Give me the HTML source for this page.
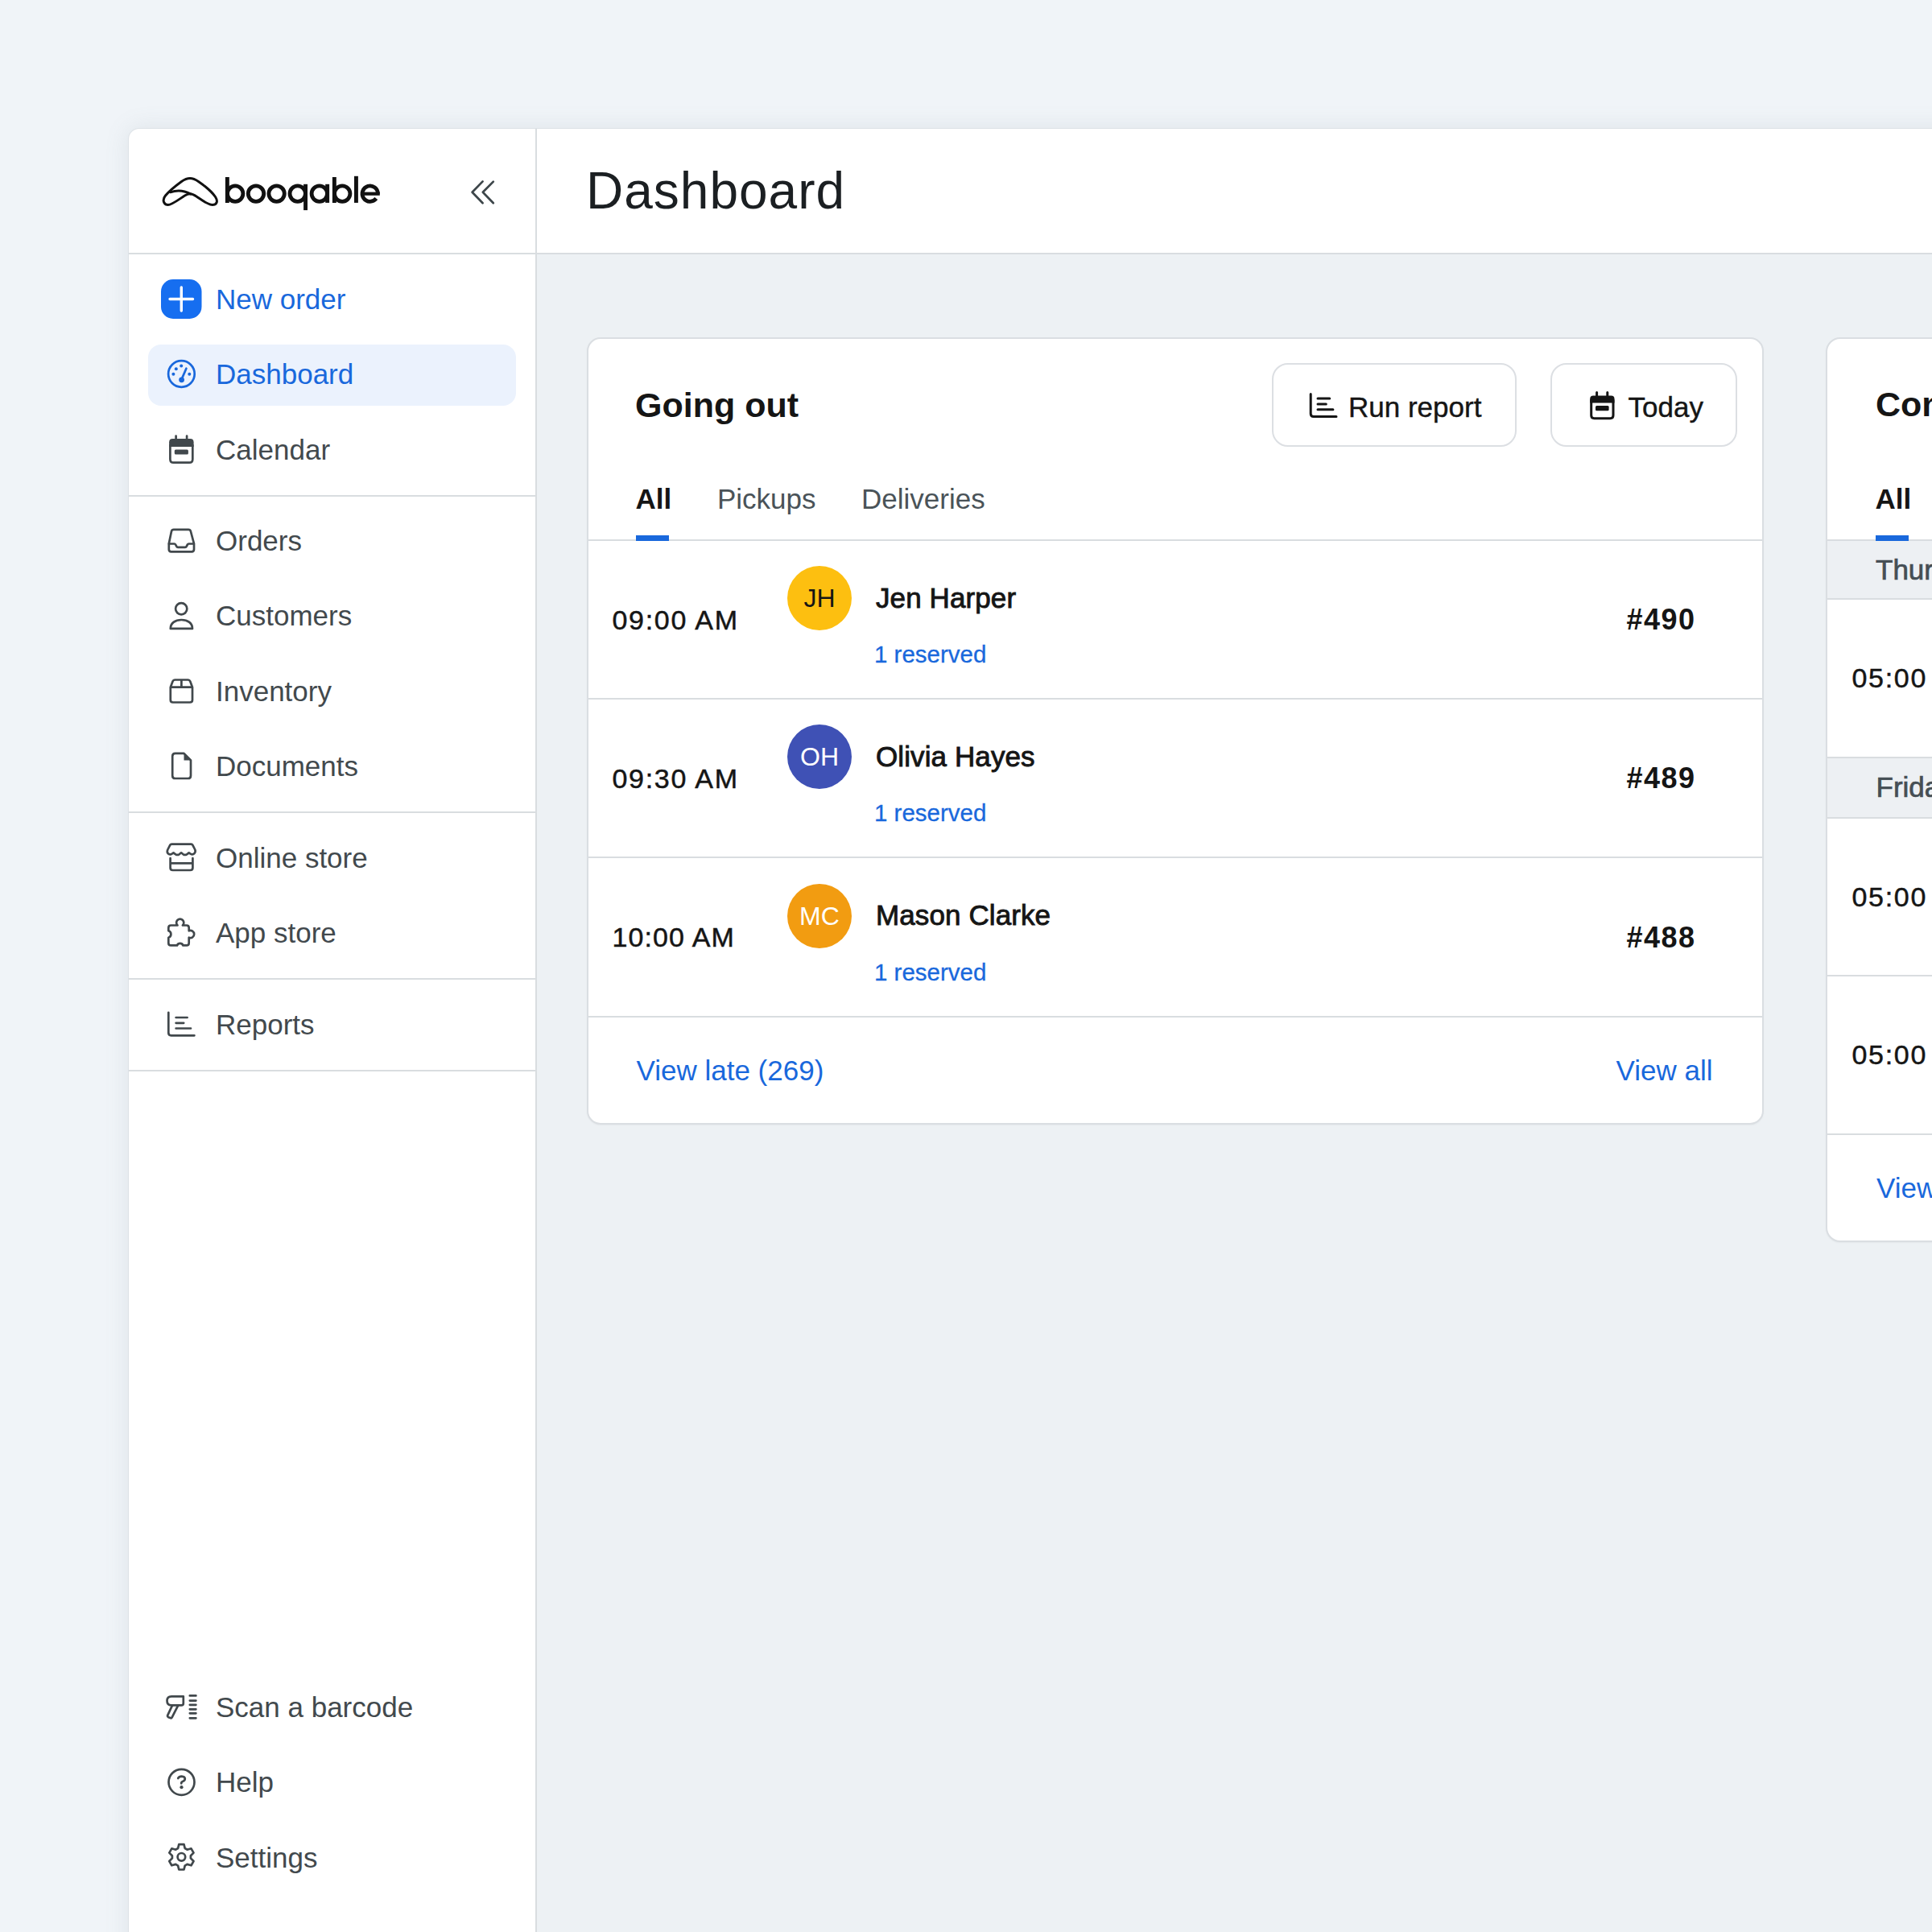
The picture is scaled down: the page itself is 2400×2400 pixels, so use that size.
<!DOCTYPE html>
<html><head><meta charset="utf-8">
<style>
html,body{margin:0;padding:0;width:2400px;height:2400px;overflow:hidden;background:#f0f4f8;}
*{box-sizing:border-box;}
body{font-family:"Liberation Sans",sans-serif;position:relative;}
.abs{position:absolute;}
.t{position:absolute;white-space:nowrap;line-height:1;}
#win{position:absolute;left:160px;top:160px;width:2300px;height:2300px;background:#fff;border-radius:13px 0 0 0;
 box-shadow:0 0 0 1px rgba(190,198,204,0.25),0 0 30px rgba(120,135,145,0.16);}
#main{position:absolute;left:667px;top:316px;width:1800px;height:2100px;background:#edf1f4;}
.hl{position:absolute;height:2px;background:#d9dde0;}
.vl{position:absolute;width:2px;background:#d9dde0;}
.nav{font-size:35px;color:#42494d;}
.blue{color:#1968dc;}
.card{position:absolute;background:#fff;border:2px solid #dadee2;border-radius:17px;box-shadow:0 1px 2px rgba(0,0,0,0.04);}
.btn{position:absolute;border:2px solid #dcdfe3;border-radius:20px;background:#fff;}
.av{position:absolute;width:80px;height:80px;border-radius:50%;font-size:32px;line-height:80px;text-align:center;}
svg{position:absolute;overflow:visible;}
</style></head><body>
<div id="win"></div>
<div id="main"></div>
<!-- header/sidebar borders -->
<div class="vl" style="left:665px;top:160px;height:2240px;"></div>
<div class="hl" style="left:160px;top:314px;width:2240px;"></div>
<div class="hl" style="left:160px;top:615px;width:505px;"></div>
<div class="hl" style="left:160px;top:1008px;width:505px;"></div>
<div class="hl" style="left:160px;top:1215px;width:505px;"></div>
<div class="hl" style="left:160px;top:1329px;width:505px;"></div>


<!-- SIDEBAR TEXT -->
<svg width="2400" height="2400" style="left:0;top:0;" viewBox="0 0 2400 2400">
 <g fill="none" stroke="#111" stroke-width="4.8">
  <circle cx="292.2" cy="240.6" r="9.7"/><circle cx="318" cy="240.6" r="9.7"/><circle cx="343.6" cy="240.6" r="9.7"/>
  <circle cx="369.7" cy="240.6" r="9.7"/><circle cx="396.8" cy="240.6" r="9.7"/><circle cx="425.2" cy="240.6" r="9.7"/>
  <path d="M469.40 240.79999999999998 A9.7 9.7 0 1 0 467.34 246.57"/>
 </g>
 <g fill="#111">
  <rect x="279.9" y="220" width="4.9" height="32"/>
  <rect x="377.1" y="228.8" width="4.9" height="32.3"/>
  <rect x="404.2" y="228.8" width="4.9" height="23.1"/>
  <rect x="412.9" y="220" width="4.9" height="32"/>
  <rect x="440" y="218.8" width="4.9" height="33.1"/>
  <rect x="450.00" y="238.6" width="21.80" height="4.2"/>
 </g>
</svg>
<div class="t nav blue" style="left:268px;top:354.2px;">New order</div>
<div class="abs" style="left:184px;top:428px;width:457px;height:76px;border-radius:16px;background:#ebf2fd;"></div>
<div class="t nav blue" style="left:268px;top:447.1px;">Dashboard</div>
<div class="t nav" style="left:268px;top:540.7px;">Calendar</div>
<div class="t nav" style="left:268px;top:654.4px;">Orders</div>
<div class="t nav" style="left:268px;top:747.4px;">Customers</div>
<div class="t nav" style="left:268px;top:840.9px;">Inventory</div>
<div class="t nav" style="left:268px;top:934.4px;">Documents</div>
<div class="t nav" style="left:268px;top:1047.8px;">Online store</div>
<div class="t nav" style="left:268px;top:1141.4px;">App store</div>
<div class="t nav" style="left:268px;top:1255.1px;">Reports</div>
<div class="t nav" style="left:268px;top:2103.3px;">Scan a barcode</div>
<div class="t nav" style="left:268px;top:2196.1px;">Help</div>
<div class="t nav" style="left:268px;top:2290.4px;">Settings</div>
<!-- HEADER -->
<div class="t" style="left:728px;top:204.8px;font-size:64px;color:#1b1f22;letter-spacing:1px;">Dashboard</div>

<svg width="2400" height="2400" style="left:0;top:0;" viewBox="0 0 2400 2400">
 <g fill="none" stroke="#111" stroke-width="3" stroke-linecap="round" stroke-linejoin="round">
  <path d="M236 221.5 C232 221.5 229 223 225.5 225.5 C218 231 210 237.5 205.5 243 C201 248.5 203.5 254.5 208.5 254.5 C214 254.5 223 247 229.5 243 C232.5 241 234 240.7 236 240.7 C238.5 240.7 240.5 241.5 244 244 C250 248 258 254.5 264 254.5 C269.5 254.5 271 250 267.5 244.5 C263 238 253 230 246.5 225.5 C243 223 240 221.5 236 221.5 Z"/>
  <path d="M211.5 238.8 C219 236.2 228 236.2 236.5 240.9"/>
 </g>
 <g fill="none" stroke="#3d464a" stroke-width="2.7" stroke-linecap="round" stroke-linejoin="round">
  <path d="M599.6 225.4 L586.6 238.8 L599.6 252.3 M612.8 225.6 L599.8 238.8 L612.8 252.3"/>
 </g>
 <!-- new order -->
 <rect x="200" y="347" width="50.5" height="49" rx="15" fill="#166ef0"/>
 <path d="M211 371.5 H239.5 M225.3 357 V386" stroke="#fff" stroke-width="3.4" stroke-linecap="round"/>
 <!-- dashboard gauge -->
 <g fill="none" stroke="#1968dc" stroke-width="2.7" stroke-linecap="round">
  <circle cx="225.4" cy="464.5" r="16.3"/>
  <path d="M225.4 471.6 L231.4 457.7"/>
 </g>
 <g fill="#1968dc">
  <circle cx="218.8" cy="458.2" r="2"/><circle cx="225.2" cy="454.6" r="2"/><circle cx="215.4" cy="464.8" r="2"/><circle cx="235.3" cy="464.8" r="2"/>
  <circle cx="225.6" cy="471.8" r="3.4"/>
 </g>
 <g fill="none" stroke="#41484c" stroke-width="2.7" stroke-linecap="round" stroke-linejoin="round">
  <!-- calendar -->
  <path d="M211.4 553 V570.5 Q211.4 574.7 215.6 574.7 H235.1 Q239.3 574.7 239.3 570.5 V553"/>
  <path d="M218.6 541.5 V545.5 M232.1 541.5 V545.5"/>
  <!-- inbox -->
  <path d="M215.8 657.8 H234.1 Q236.3 657.8 236.9 660 L241 675.3 V682.5 Q241 685.3 238.2 685.3 H212.6 Q209.8 685.3 209.8 682.5 V675.3 L213 660 Q213.6 657.8 215.8 657.8 Z"/>
  <path d="M210 675.5 H216.5 Q217.6 675.5 218.1 676.5 L219.2 678.6 Q219.8 679.8 221 679.8 H230 Q231.2 679.8 231.8 678.6 L232.9 676.5 Q233.4 675.5 234.5 675.5 H240.8"/>
  <!-- customers -->
  <circle cx="225.2" cy="756.2" r="7.1"/>
  <path d="M211.8 780.9 C211.8 774 217.5 770 225.4 770 C233.3 770 239 774 239 780.9 Z"/>
  <!-- inventory -->
  <path d="M211.8 853.7 L214.5 846.6 Q215.3 844.5 217.5 844.5 H233.3 Q235.5 844.5 236.3 846.6 L239 853.7 V869.5 Q239 872.5 236 872.5 H214.8 Q211.8 872.5 211.8 869.5 Z M211.8 853.7 H239 M225.4 844.5 V853.7"/>
  <!-- documents -->
  <path d="M228.5 935.9 H217.8 Q214.2 935.9 214.2 939.5 V963.4 Q214.2 967 217.8 967 H233.4 Q237 967 237 963.4 V944.4 Z"/>
  <!-- online store -->
  <path d="M213.3 1048.7 H237.5 Q238.8 1048.7 239.4 1049.8 L242.3 1055.5 Q243.3 1058 241.6 1060 Q239.4 1062.2 236.6 1060.6 L234.7 1059.3 L232 1061.3 Q229.8 1062.6 227.6 1061.3 L225.1 1059.3 L222.6 1061.3 Q220.4 1062.6 218.2 1061.3 L215.5 1059.3 L213.2 1060.8 Q210.4 1062.4 208.6 1060.2 Q207.1 1058.2 208.3 1055.5 L211.2 1049.8 Q211.9 1048.7 213.3 1048.7 Z"/>
  <path d="M211.6 1066.2 V1078 Q211.6 1081 214.6 1081 H236.4 Q239.4 1081 239.4 1078 V1066.2 M211.6 1072.4 H239.4"/>
  <!-- app store -->
  <path d="M209.3 1152.5 Q209.3 1149.5 212.3 1149.5 H220.5 A4.6 4.6 0 1 1 226.9 1149.5 H231.7 Q234.7 1149.5 234.7 1152.5 V1156.3 A4.6 4.6 0 1 1 234.7 1164.7 V1171.4 Q234.7 1174.4 231.7 1174.4 H227.4 A4 4 0 0 0 220 1174.4 H212.3 Q209.3 1174.4 209.3 1171.4 V1164.7 A4.4 4.4 0 0 0 209.3 1156.3 Z"/>
  <!-- reports -->
  <path d="M209.3 1257.8 V1283 Q209.3 1286.3 212.6 1286.3 H241.4 M218.6 1264 H232.6 M218.6 1270.8 H228.2 M218.6 1277.5 H237"/>
  <!-- scan -->
  <path d="M213 2107.3 H227.8 V2116 Q227.8 2118.4 225.4 2118.4 H213 Q207.5 2118.4 207.5 2112.85 Q207.5 2107.3 213 2107.3 Z"/>
  <path d="M214 2118.6 L208.3 2130.6 Q207.6 2132.4 209.3 2133.2 L211.4 2134.1 Q213 2134.8 213.8 2133.2 L221.2 2118.6"/>
  <path d="M235.8 2106.4 H243.4 M235.8 2112.6 H243.4 M235.8 2117.8 H243.4 M235.8 2123.3 H243.4 M235.8 2128.3 H243.4 M235.8 2134.3 H243.4"/>
  <!-- help -->
  <circle cx="225.5" cy="2213.8" r="16"/>
  <path d="M221.2 2209 Q222.5 2206.6 225.6 2206.6 Q229.8 2206.8 229.8 2209.8 Q229.8 2211.8 227.4 2212.8 Q225.2 2213.6 225.2 2215.4"/>
  <!-- settings -->
  <path d="M221.1 2296.0 L222.3 2291.1 L228.5 2291.1 L229.7 2296.0 L232.5 2297.7 L237.5 2296.3 L240.5 2301.6 L236.9 2305.2 L236.9 2308.4 L240.5 2312.0 L237.5 2317.3 L232.5 2315.9 L229.7 2317.6 L228.5 2322.5 L222.3 2322.5 L221.1 2317.6 L218.3 2315.9 L213.3 2317.3 L210.3 2312.0 L213.9 2308.4 L213.9 2305.2 L210.3 2301.6 L213.3 2296.3 L218.3 2297.7 Z"/>
  <circle cx="225.4" cy="2306.8" r="4.8"/>
 </g>
 <g fill="#41484c">
  <path d="M210.1 555 V549.3 Q210.1 545 214.4 545 H236.3 Q240.6 545 240.6 549.3 V555 Z"/>
  <rect x="216.8" y="558.6" width="17.1" height="6" rx="1.5"/>
  <path d="M228.5 935.9 V944.4 H237 Z"/>
  <circle cx="225.5" cy="2220.2" r="2.1"/>
 </g>
</svg>


<!-- CARD 1 -->
<div class="card" style="left:729px;top:419px;width:1462px;height:978px;"></div>
<div class="t" style="left:789px;top:481.6px;font-size:43px;font-weight:700;color:#151515;">Going out</div>
<div class="btn" style="left:1580px;top:451px;width:304px;height:104px;"></div>
<div class="t" style="left:1675px;top:488px;font-size:35px;color:#151515;-webkit-text-stroke:0.4px #151515;">Run report</div>
<div class="btn" style="left:1926px;top:451px;width:232px;height:104px;"></div>
<div class="t" style="left:2022.5px;top:488px;font-size:35px;color:#151515;-webkit-text-stroke:0.4px #151515;">Today</div>
<div class="t" style="left:789.5px;top:602px;font-size:35px;font-weight:700;color:#151515;">All</div>
<div class="t" style="left:891px;top:602px;font-size:35px;color:#4a5358;">Pickups</div>
<div class="t" style="left:1070px;top:602px;font-size:35px;color:#4a5358;">Deliveries</div>
<div class="hl" style="left:731px;top:670px;width:1458px;"></div>
<div class="abs" style="left:790px;top:665px;width:41px;height:7px;background:#1968dc;"></div>
<div class="hl" style="left:731px;top:867px;width:1458px;"></div>
<div class="hl" style="left:731px;top:1064px;width:1458px;"></div>
<div class="hl" style="left:731px;top:1262px;width:1458px;"></div>

<div class="t" style="left:760.5px;top:753.1px;font-size:34px;letter-spacing:1.7px;color:#151515;-webkit-text-stroke:0.5px #151515;">09:00 AM</div>
<div class="t" style="left:760.5px;top:949.8px;font-size:34px;letter-spacing:1.7px;color:#151515;-webkit-text-stroke:0.5px #151515;">09:30 AM</div>
<div class="t" style="left:760.5px;top:1147.1px;font-size:34px;letter-spacing:1.1px;color:#151515;-webkit-text-stroke:0.5px #151515;">10:00 AM</div>

<div class="av" style="left:978px;top:703px;background:#fdbf10;color:#151515;">JH</div>
<div class="av" style="left:978px;top:899.5px;background:#3f51b5;color:#fff;">OH</div>
<div class="av" style="left:978px;top:1097.7px;background:#f29c11;color:#fff;">MC</div>

<div class="t" style="left:1088px;top:724.9px;font-size:35px;color:#151515;-webkit-text-stroke:0.9px #151515;letter-spacing:0.1px;">Jen Harper</div>
<div class="t" style="left:1088px;top:921.5px;font-size:35px;color:#151515;-webkit-text-stroke:0.9px #151515;letter-spacing:0.1px;">Olivia Hayes</div>
<div class="t" style="left:1088px;top:1119.4px;font-size:35px;color:#151515;-webkit-text-stroke:0.9px #151515;letter-spacing:0.1px;">Mason Clarke</div>
<div class="t blue" style="left:1086px;top:798.3px;font-size:29.5px;-webkit-text-stroke:0.3px #1968dc;">1 reserved</div>
<div class="t blue" style="left:1086px;top:995.4px;font-size:29.5px;-webkit-text-stroke:0.3px #1968dc;">1 reserved</div>
<div class="t blue" style="left:1086px;top:1193.3px;font-size:29.5px;-webkit-text-stroke:0.3px #1968dc;">1 reserved</div>

<div class="t" style="left:2020.5px;top:751.9px;font-size:36px;font-weight:700;letter-spacing:1.5px;color:#151515;">#490</div>
<div class="t" style="left:2020.5px;top:948.6px;font-size:36px;font-weight:700;letter-spacing:1.5px;color:#151515;">#489</div>
<div class="t" style="left:2020.5px;top:1147px;font-size:36px;font-weight:700;letter-spacing:1.5px;color:#151515;">#488</div>

<div class="t blue" style="left:790.5px;top:1311.9px;font-size:35px;">View late (269)</div>
<div class="t blue" style="left:2007.5px;top:1311.9px;font-size:35px;">View all</div>

<!-- CARD 2 -->
<div class="card" style="left:2268px;top:419px;width:400px;height:1124px;border-radius:18px 0 0 18px;"></div>
<div class="t" style="left:2330px;top:481.2px;font-size:43px;font-weight:700;color:#151515;">Coming back</div>
<div class="t" style="left:2329.5px;top:602px;font-size:35px;font-weight:700;color:#151515;">All</div>
<div class="hl" style="left:2270px;top:670px;width:200px;"></div>
<div class="abs" style="left:2330px;top:665px;width:41px;height:7px;background:#1968dc;"></div>
<div class="abs" style="left:2270px;top:672px;width:200px;height:71px;background:#edf0f3;"></div>
<div class="hl" style="left:2270px;top:743px;width:200px;"></div>
<div class="t" style="left:2330px;top:690.4px;font-size:35px;color:#454e54;-webkit-text-stroke:0.7px #454e54;">Thursday</div>
<div class="t" style="left:2300.5px;top:825.2px;font-size:34px;letter-spacing:1.7px;color:#151515;-webkit-text-stroke:0.5px #151515;">05:00 PM</div>
<div class="hl" style="left:2270px;top:940px;width:200px;"></div>
<div class="abs" style="left:2270px;top:942px;width:200px;height:73px;background:#edf0f3;"></div>
<div class="hl" style="left:2270px;top:1015px;width:200px;"></div>
<div class="t" style="left:2330.5px;top:959.7px;font-size:35px;color:#454e54;-webkit-text-stroke:0.7px #454e54;">Friday</div>
<div class="t" style="left:2300.5px;top:1097px;font-size:34px;letter-spacing:1.7px;color:#151515;-webkit-text-stroke:0.5px #151515;">05:00 PM</div>
<div class="hl" style="left:2270px;top:1211px;width:200px;"></div>
<div class="t" style="left:2300.5px;top:1292.6px;font-size:34px;letter-spacing:1.7px;color:#151515;-webkit-text-stroke:0.5px #151515;">05:00 PM</div>
<div class="hl" style="left:2270px;top:1408px;width:200px;"></div>
<div class="t blue" style="left:2331px;top:1458px;font-size:35px;">View all</div>

<svg width="2400" height="2400" style="left:0;top:0;" viewBox="0 0 2400 2400">
 <g fill="none" stroke="#151515" stroke-width="3" stroke-linecap="round" stroke-linejoin="round">
  <path d="M1628.2 489.6 V514 Q1628.2 517.6 1631.8 517.6 H1660 M1637 495.1 H1651.7 M1637 502.1 H1647.3 M1637 508.8 H1655.9"/>
  <path d="M1976.7 497 V516 Q1976.7 519.7 1980.4 519.7 H2000.3 Q2004 519.7 2004 516 V497"/>
  <path d="M1983.6 487.5 V492 M1996.8 487.5 V492"/>
 </g>
 <g fill="#151515">
  <path d="M1975.2 500.5 V495.5 Q1975.2 491.5 1979.2 491.5 H2001.5 Q2005.5 491.5 2005.5 495.5 V500.5 Z"/>
  <rect x="1982" y="504" width="16.6" height="6.3" rx="1.5"/>
 </g>
</svg>

</body></html>
